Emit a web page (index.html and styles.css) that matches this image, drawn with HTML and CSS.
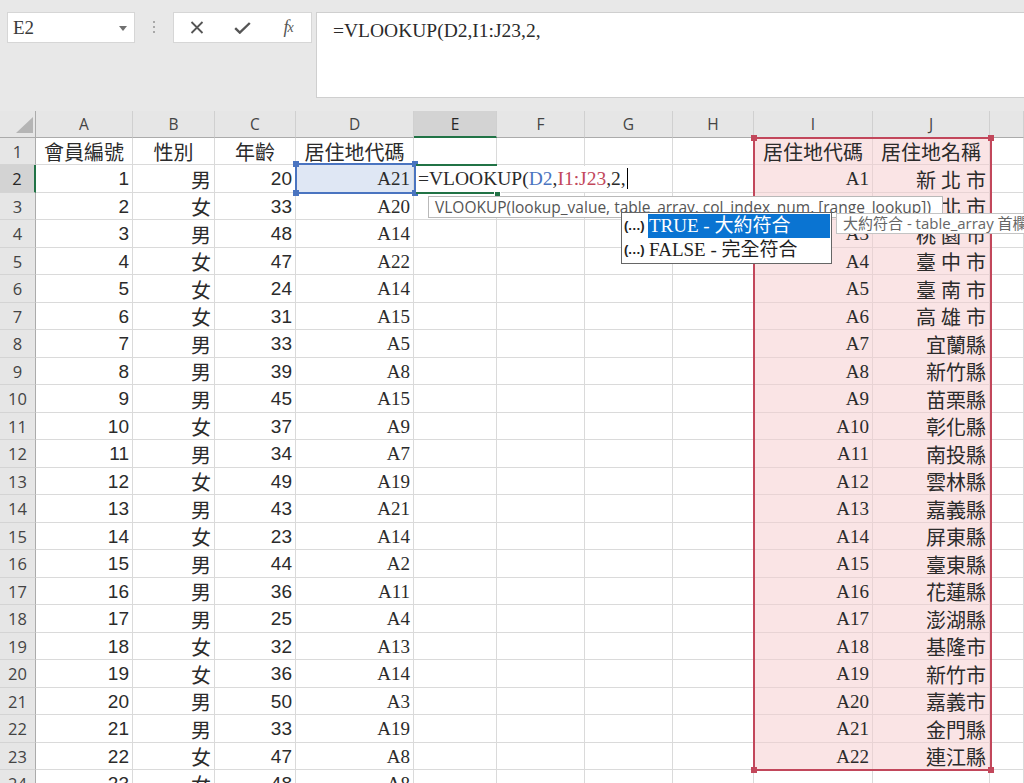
FILE: index.html
```html
<!DOCTYPE html>
<html lang="zh-Hant">
<head>
<meta charset="utf-8">
<title>VLOOKUP</title>
<link rel="stylesheet" href="styles.css">
</head>
<body>
<div class="app">
  <div class="topbar">
    <div class="namebox"><span class="name">E2</span><svg class="caret" width="8" height="5" viewBox="0 0 8 5"><path d="M0 0h8L4 5z" fill="#707070"/></svg></div>
    <div class="grip"><i></i><i></i><i></i></div>
    <div class="fbtns">
      <span class="fb"><svg width="14" height="13" viewBox="0 0 14 13"><path d="M1.5 1l11 11M12.5 1l-11 11" stroke="#555" stroke-width="1.8" fill="none"/></svg></span>
      <span class="fb"><svg width="17" height="12" viewBox="0 0 17 12"><path d="M1.2 6.2l4.6 4.4L15.8 1" stroke="#555" stroke-width="2.4" fill="none"/></svg></span>
      <span class="fb fx">f<span class="fxx">x</span></span>
    </div>
    <div class="formula">=VLOOKUP(D2,I1:J23,2,</div>
  </div>

  <div class="sheet">
    <div class="corner"><svg width="36" height="27" viewBox="0 0 36 27"><path d="M33 6V22H16z" fill="#b5b5b5"/></svg></div>
    <div class="ch">A</div><div class="ch">B</div><div class="ch">C</div><div class="ch">D</div><div class="ch on">E</div><div class="ch">F</div><div class="ch">G</div><div class="ch">H</div><div class="ch">I</div><div class="ch">J</div><div class="ch"></div>

    <div class="rh">1</div><div class="c ct">會員編號</div><div class="c ct">性別</div><div class="c ct">年齡</div><div class="c ct">居住地代碼</div><div class="c"></div><div class="c"></div><div class="c"></div><div class="c"></div><div class="c ct r">居住地代碼</div><div class="c ct r">居住地名稱</div><div class="c"></div>
    <div class="rh on">2</div><div class="c n">1</div><div class="c">男</div><div class="c n">20</div><div class="c s hl">A21</div><div class="c"></div><div class="c"></div><div class="c"></div><div class="c"></div><div class="c s r">A1</div><div class="c r">新 北 市</div><div class="c"></div>
    <div class="rh">3</div><div class="c n">2</div><div class="c">女</div><div class="c n">33</div><div class="c s">A20</div><div class="c"></div><div class="c"></div><div class="c"></div><div class="c"></div><div class="c s r">A2</div><div class="c r">臺 北 市</div><div class="c"></div>
    <div class="rh">4</div><div class="c n">3</div><div class="c">男</div><div class="c n">48</div><div class="c s">A14</div><div class="c"></div><div class="c"></div><div class="c"></div><div class="c"></div><div class="c s r">A3</div><div class="c r">桃 園 市</div><div class="c"></div>
    <div class="rh">5</div><div class="c n">4</div><div class="c">女</div><div class="c n">47</div><div class="c s">A22</div><div class="c"></div><div class="c"></div><div class="c"></div><div class="c"></div><div class="c s r">A4</div><div class="c r">臺 中 市</div><div class="c"></div>
    <div class="rh">6</div><div class="c n">5</div><div class="c">女</div><div class="c n">24</div><div class="c s">A14</div><div class="c"></div><div class="c"></div><div class="c"></div><div class="c"></div><div class="c s r">A5</div><div class="c r">臺 南 市</div><div class="c"></div>
    <div class="rh">7</div><div class="c n">6</div><div class="c">女</div><div class="c n">31</div><div class="c s">A15</div><div class="c"></div><div class="c"></div><div class="c"></div><div class="c"></div><div class="c s r">A6</div><div class="c r">高 雄 市</div><div class="c"></div>
    <div class="rh">8</div><div class="c n">7</div><div class="c">男</div><div class="c n">33</div><div class="c s">A5</div><div class="c"></div><div class="c"></div><div class="c"></div><div class="c"></div><div class="c s r">A7</div><div class="c r">宜蘭縣</div><div class="c"></div>
    <div class="rh">9</div><div class="c n">8</div><div class="c">男</div><div class="c n">39</div><div class="c s">A8</div><div class="c"></div><div class="c"></div><div class="c"></div><div class="c"></div><div class="c s r">A8</div><div class="c r">新竹縣</div><div class="c"></div>
    <div class="rh">10</div><div class="c n">9</div><div class="c">男</div><div class="c n">45</div><div class="c s">A15</div><div class="c"></div><div class="c"></div><div class="c"></div><div class="c"></div><div class="c s r">A9</div><div class="c r">苗栗縣</div><div class="c"></div>
    <div class="rh">11</div><div class="c n">10</div><div class="c">女</div><div class="c n">37</div><div class="c s">A9</div><div class="c"></div><div class="c"></div><div class="c"></div><div class="c"></div><div class="c s r">A10</div><div class="c r">彰化縣</div><div class="c"></div>
    <div class="rh">12</div><div class="c n">11</div><div class="c">男</div><div class="c n">34</div><div class="c s">A7</div><div class="c"></div><div class="c"></div><div class="c"></div><div class="c"></div><div class="c s r">A11</div><div class="c r">南投縣</div><div class="c"></div>
    <div class="rh">13</div><div class="c n">12</div><div class="c">女</div><div class="c n">49</div><div class="c s">A19</div><div class="c"></div><div class="c"></div><div class="c"></div><div class="c"></div><div class="c s r">A12</div><div class="c r">雲林縣</div><div class="c"></div>
    <div class="rh">14</div><div class="c n">13</div><div class="c">男</div><div class="c n">43</div><div class="c s">A21</div><div class="c"></div><div class="c"></div><div class="c"></div><div class="c"></div><div class="c s r">A13</div><div class="c r">嘉義縣</div><div class="c"></div>
    <div class="rh">15</div><div class="c n">14</div><div class="c">女</div><div class="c n">23</div><div class="c s">A14</div><div class="c"></div><div class="c"></div><div class="c"></div><div class="c"></div><div class="c s r">A14</div><div class="c r">屏東縣</div><div class="c"></div>
    <div class="rh">16</div><div class="c n">15</div><div class="c">男</div><div class="c n">44</div><div class="c s">A2</div><div class="c"></div><div class="c"></div><div class="c"></div><div class="c"></div><div class="c s r">A15</div><div class="c r">臺東縣</div><div class="c"></div>
    <div class="rh">17</div><div class="c n">16</div><div class="c">男</div><div class="c n">36</div><div class="c s">A11</div><div class="c"></div><div class="c"></div><div class="c"></div><div class="c"></div><div class="c s r">A16</div><div class="c r">花蓮縣</div><div class="c"></div>
    <div class="rh">18</div><div class="c n">17</div><div class="c">男</div><div class="c n">25</div><div class="c s">A4</div><div class="c"></div><div class="c"></div><div class="c"></div><div class="c"></div><div class="c s r">A17</div><div class="c r">澎湖縣</div><div class="c"></div>
    <div class="rh">19</div><div class="c n">18</div><div class="c">女</div><div class="c n">32</div><div class="c s">A13</div><div class="c"></div><div class="c"></div><div class="c"></div><div class="c"></div><div class="c s r">A18</div><div class="c r">基隆市</div><div class="c"></div>
    <div class="rh">20</div><div class="c n">19</div><div class="c">女</div><div class="c n">36</div><div class="c s">A14</div><div class="c"></div><div class="c"></div><div class="c"></div><div class="c"></div><div class="c s r">A19</div><div class="c r">新竹市</div><div class="c"></div>
    <div class="rh">21</div><div class="c n">20</div><div class="c">男</div><div class="c n">50</div><div class="c s">A3</div><div class="c"></div><div class="c"></div><div class="c"></div><div class="c"></div><div class="c s r">A20</div><div class="c r">嘉義市</div><div class="c"></div>
    <div class="rh">22</div><div class="c n">21</div><div class="c">男</div><div class="c n">33</div><div class="c s">A19</div><div class="c"></div><div class="c"></div><div class="c"></div><div class="c"></div><div class="c s r">A21</div><div class="c r">金門縣</div><div class="c"></div>
    <div class="rh">23</div><div class="c n">22</div><div class="c">女</div><div class="c n">47</div><div class="c s">A8</div><div class="c"></div><div class="c"></div><div class="c"></div><div class="c"></div><div class="c s r">A22</div><div class="c r">連江縣</div><div class="c"></div>
    <div class="rh">24</div><div class="c n">23</div><div class="c">女</div><div class="c n">48</div><div class="c s">A8</div><div class="c"></div><div class="c"></div><div class="c"></div><div class="c"></div><div class="c"></div><div class="c"></div><div class="c"></div>

    <!-- overlays -->
    <div class="refbox blue"><i class="q tl"></i><i class="q tr"></i><i class="q bl"></i><i class="q br"></i></div>
    <div class="refbox red"><i class="q tl"></i><i class="q tr"></i><i class="q bl"></i><i class="q br"></i></div>
    <div class="active"><i class="handle"></i></div>
    <div class="editor">=VLOOKUP(<span class="kb">D2</span>,<span class="kr">I1:J23</span>,2,<span class="cursor"></span></div>
    <div class="tip">VLOOKUP(lookup_value, table_array, col_index_num, [range_lookup])</div>
    <div class="sidetip">大約符合 - table_array 首欄</div>
    <div class="dropdown">
      <div class="opt"><span class="dots">(…)</span><span class="lbl on">TRUE - 大約符合</span></div>
      <div class="opt"><span class="dots">(…)</span><span class="lbl">FALSE - 完全符合</span></div>
    </div>
  </div>
</div>
</body>
</html>
```

FILE: styles.css
```css
* { box-sizing: border-box; }
html, body { margin: 0; padding: 0; }
body {
  width: 1024px;
  height: 783px;
  overflow: hidden;
  background: #ffffff;
  font-family: "Liberation Serif", "Noto Sans CJK TC", serif;
}
.app { width: 1024px; height: 783px; overflow: hidden; }

/* ---------- formula bar ---------- */
.topbar {
  height: 111px;
  background: #e8e8e8;
  display: flex;
  align-items: flex-start;
  padding: 12px 0 0 7px;
}
.namebox {
  width: 128px;
  height: 31px;
  background: #fff;
  border: 1px solid #d6d6d6;
  display: flex;
  align-items: center;
  justify-content: space-between;
  padding: 0 7px 0 5px;
}
.name { font-size: 19px; color: #3a3a3a; font-family: "Liberation Serif", serif; }
.caret { margin-top: 1px; }
.grip {
  width: 38px;
  display: flex;
  flex-direction: column;
  align-items: center;
  gap: 3px;
  padding-top: 9px;
}
.grip i { display: block; width: 2px; height: 2px; background: #a8a8a8; }
.fbtns {
  width: 139px;
  height: 31px;
  background: #fff;
  border: 1px solid #d6d6d6;
  display: flex;
  align-items: center;
}
.fb { width: 46px; display: flex; justify-content: center; align-items: center; }
.fx {
  font-family: "Liberation Serif", serif;
  font-style: italic;
  font-size: 18px;
  color: #555;
  letter-spacing: -1px;
}
.fxx { font-size: 14px; }
.formula {
  margin-left: 4px;
  flex: 1;
  height: 86px;
  background: #fff;
  border: 1px solid #cfcfcf;
  border-right: none;
  padding: 6px 0 0 16px;
  font-size: 19.5px;
  line-height: 24px;
  color: #2a2a2a;
  font-family: "Liberation Serif", serif;
}

/* ---------- sheet ---------- */
.sheet {
  position: relative;
  display: grid;
  grid-template-columns: 36px 97px 82px 81px 118px 83px 88px 88px 81px 119px 117px 34px;
  grid-template-rows: 27px repeat(12, 27px 28px);
}
.corner {
  background: #e6e6e6;
  border-right: 1px solid #ababab;
  border-bottom: 1px solid #ababab;
}
.corner svg { display: block; }
.ch {
  background: #e6e6e6;
  border-right: 1px solid #d0d0d0;
  border-bottom: 1px solid #ababab;
  display: flex;
  align-items: center;
  justify-content: center;
  font-family: "Open Sans", "Noto Sans", sans-serif;
  font-size: 15.5px;
  color: #444;
}
.ch.on {
  background: #d3d3d3;
  border-bottom: 2px solid #217346;
  color: #262626;
}
.rh {
  background: #e6e6e6;
  border-right: 1px solid #ababab;
  border-bottom: 1px solid #d4d4d4;
  display: flex;
  align-items: center;
  justify-content: center;
  font-family: "Open Sans", "Noto Sans", sans-serif;
  font-size: 16.5px;
  color: #444;
}
.rh.on {
  background: #d3d3d3;
  border-right: 2px solid #217346;
  color: #262626;
}
.c {
  border-right: 1px solid #dadada;
  border-bottom: 1px solid #dadada;
  display: flex;
  align-items: center;
  justify-content: flex-end;
  padding: 1px 3px 0 3px;
  white-space: nowrap;
  overflow: hidden;
  font-family: "Liberation Serif", "Noto Sans CJK TC", serif;
  font-size: 20px;
  color: #2b2b2b;
}
.c.ct { justify-content: center; padding: 1px 0 0 0; }
.c.n { font-family: "Liberation Sans", sans-serif; font-size: 19px; }
.c.s { font-size: 19px; }
.c.r { background: #fae4e5; border-right-color: #e8d3d4; border-bottom-color: #e8d3d4; }
.c.hl { background: #dfe7f4; }

/* ---------- overlays ---------- */
.refbox { position: absolute; border: 2px solid; }
.refbox.blue { left: 295px; top: 52px; width: 121px; height: 31px; border-color: #4a74c0; }
.refbox.red { left: 753px; top: 26px; width: 239px; height: 634px; border-color: #c2475b; }
.q { position: absolute; width: 6px; height: 6px; }
.blue .q { background: #4a74c0; }
.red .q { background: #c2475b; }
.q.tl { left: -4px; top: -4px; }
.q.tr { right: -4px; top: -4px; }
.q.bl { left: -4px; bottom: -4px; }
.q.br { right: -4px; bottom: -4px; }

.active {
  position: absolute;
  left: 416px;
  top: 53px;
  width: 81px;
  height: 30px;
  border-top: 2px solid #217346;
  border-bottom: 2px solid #217346;
}
.handle {
  position: absolute;
  right: -4px;
  bottom: -5px;
  width: 7px;
  height: 7px;
  background: #217346;
  border: 1px solid #fff;
}
.editor {
  position: absolute;
  left: 416px;
  top: 55px;
  width: 228px;
  height: 26px;
  background: #fff;
  padding: 1px 0 0 2px;
  font-family: "Liberation Serif", serif;
  font-size: 19.5px;
  line-height: 24px;
  color: #2a2a2a;
  white-space: nowrap;
}
.kb { color: #4a74c0; }
.kr { color: #c2475b; }
.cursor {
  display: inline-block;
  width: 1px;
  height: 21px;
  background: #000;
  vertical-align: -4px;
  margin-left: 1px;
}
.tip {
  position: absolute;
  left: 428px;
  top: 85px;
  width: 515px;
  height: 22px;
  background: #fff;
  border: 1px solid #b9b9b9;
  padding: 0 0 0 6px;
  font-family: "Open Sans", "Noto Sans", sans-serif;
  font-size: 15.5px;
  line-height: 20px;
  color: #555;
  white-space: nowrap;
  overflow: hidden;
}
.sidetip {
  position: absolute;
  left: 836px;
  top: 102px;
  width: 200px;
  height: 21px;
  background: #fff;
  border: 1px solid #c4c4c4;
  padding: 0 0 0 6px;
  font-family: "Open Sans", "Noto Sans CJK TC", sans-serif;
  font-size: 15px;
  line-height: 19px;
  color: #666;
  white-space: nowrap;
  overflow: hidden;
}
.dropdown {
  position: absolute;
  left: 621px;
  top: 101px;
  width: 211px;
  height: 52px;
  background: #fff;
  border: 1px solid #666;
  padding: 1px 1px 0 2px;
  display: flex;
  flex-direction: column;
}
.opt {
  height: 24px;
  display: flex;
  align-items: stretch;
  white-space: nowrap;
}
.dots {
  width: 24px;
  font-family: "Liberation Sans", sans-serif;
  font-size: 13px;
  font-weight: bold;
  line-height: 24px;
  color: #222;
  letter-spacing: -0.5px;
}
.lbl {
  flex: 1;
  font-family: "Liberation Serif", "Noto Sans CJK TC", serif;
  font-size: 19px;
  line-height: 24px;
  color: #1e1e1e;
  padding-left: 1px;
}
.lbl.on { background: #0a74d2; color: #fff; }
```
